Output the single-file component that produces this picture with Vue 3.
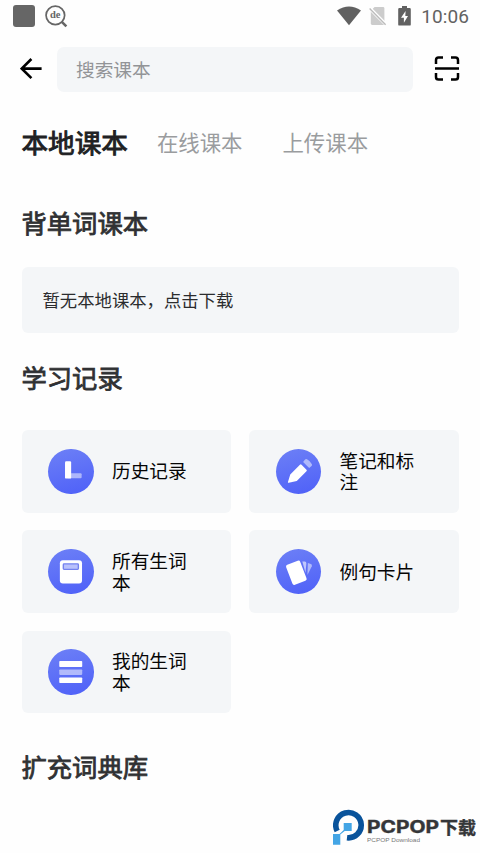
<script setup>
const cards = [
  { icon: 'clock', label: '历史记录' },
  { icon: 'pencil', label: '笔记和标注' },
  { icon: 'book', label: '所有生词本' },
  { icon: 'cards', label: '例句卡片' },
  { icon: 'list', label: '我的生词本' },
]
</script>

<template>
  <div class="screen">
    <div class="status">
      <div class="status-group">
        <span class="app-square"></span>
        <svg class="lens" viewBox="0 0 24 24">
          <circle cx="10.8" cy="10.8" r="9.7" fill="none" stroke="#666" stroke-width="1.8" />
          <path d="M17.3 17.3 22.3 22.3" stroke="#666" stroke-width="2.6" />
          <text x="10.6" y="13.8" text-anchor="middle">de</text>
        </svg>
      </div>
      <div class="status-group right">
        <svg class="wifi" viewBox="0 0 24 20">
          <path d="M0 4.4Q12-3.6 24 4.4L12 19.3Z" fill="#616161" />
        </svg>
        <svg class="sim" viewBox="0 0 18 20">
          <path d="M5.6 1H14q1.4 0 1.4 1.4V19H3.2q-1.4 0-1.4-1.4V4.8Z" fill="#ccc" />
          <path d="M.2 1.8 17 18.6" stroke="#fff" stroke-width="3.4" />
          <path d="M.6 2.6 16.6 18.8" stroke="#bbb" stroke-width="1.4" />
        </svg>
        <svg class="battery" viewBox="0 0 13 20">
          <path d="M4 0h5v2h2.6q1.2 0 1.2 1.2v15.2q0 1.2-1.2 1.2H1.4q-1.2 0-1.2-1.2V3.2Q.2 2 1.4 2H4Z" fill="#616161" />
          <path d="M7.6 5 3 11.8h2.9v5L10 10H7.3Z" fill="#fff" />
        </svg>
        <span class="time">10:06</span>
      </div>
    </div>

    <header class="header">
      <svg class="back" viewBox="0 0 22 22">
        <path d="M11.4 1 1.8 10.6 11.4 20.2M2 10.6h19.6" fill="none" stroke="#000" stroke-width="2.6" />
      </svg>
      <div class="search">搜索课本</div>
      <svg class="scan" viewBox="0 0 26 26">
        <path d="M2 8V4.2Q2 1.6 4.6 1.6H9M17 1.6h4.4Q24 1.6 24 4.2V8M2 17v4Q2 23.6 4.6 23.6H9M17 23.6h4.4Q24 23.6 24 21V17M1 12.5h24" fill="none" stroke="#000" stroke-width="2.5" />
      </svg>
    </header>

    <nav class="tabs">
      <span class="tab active">本地课本</span>
      <span class="tab">在线课本</span>
      <span class="tab">上传课本</span>
    </nav>

    <main class="content">
      <h2 class="title">背单词课本</h2>
      <div class="empty">暂无本地课本，点击下载</div>
      <h2 class="title records">学习记录</h2>
      <div class="grid">
        <div v-for="card in cards" :key="card.icon" class="card">
          <span class="badge">
            <svg viewBox="0 0 46 46">
              <g v-if="card.icon === 'clock'" fill="#fff">
                <path d="M23 24.6h10q1 0 1 1v3q0 1-1 1H20Z" opacity=".5" />
                <rect x="17.2" y="12.5" width="6.2" height="17.4" rx="1.2" />
              </g>
              <g v-else-if="card.icon === 'pencil'" fill="#fff">
                <path d="M24.2 15.9q.8-.8 1.6 0l5 5q.8.8 0 1.6L21 32.3 12.9 34.2q-1.1.2-.8-.9L14.4 25.7Z" />
                <path d="M27.4 13.2l2-2.5q.8-.9 1.9-.4 3.3 1.5 5 5.1.5 1-.4 1.9l-2.4 2Z" opacity=".5" />
              </g>
              <g v-else-if="card.icon === 'book'">
                <rect x="12" y="11.4" width="22.4" height="23.4" rx="3" fill="#fff" />
                <rect x="15.5" y="15" width="15.2" height="5.6" rx=".8" fill="#b9c1fc" stroke="#7482ef" stroke-width="1.4" />
              </g>
              <g v-else-if="card.icon === 'cards'" fill="#fff">
                <path d="M26.6 12.6h2.4q1.9.2 1.7 2l-.9 9.4Z" opacity=".6" />
                <path d="M32.2 14.2l3 1q1.7.6 1 2.3l-4.4 8.8Z" opacity=".5" />
                <rect x="12.9" y="13.2" width="15.3" height="21.6" rx="2" transform="rotate(-21 20.6 24)" />
              </g>
              <g v-else fill="#fff">
                <rect x="11.4" y="12.2" width="23.2" height="6" rx=".8" />
                <rect x="11.4" y="20.8" width="23.2" height="5.4" rx=".8" opacity=".52" />
                <rect x="11.4" y="28.8" width="23.2" height="5.6" rx=".8" />
              </g>
            </svg>
          </span>
          <span class="label">{{ card.label }}</span>
        </div>
      </div>
      <h2 class="title">扩充词典库</h2>
    </main>

    <div class="brand">
      <svg class="brand-mark" viewBox="0 0 32 37">
        <path d="M4.2 22A12.7 12.7 0 1 1 14 28.8" fill="none" stroke="#09539b" stroke-width="5.6" />
        <path d="M10.7 14h8v8h-7l-4.4 3.6v10.1H0V25h6.5l4.2-4Z" fill="#43a5e5" />
      </svg>
      <div class="brand-copy">
        <svg class="brand-name" viewBox="0 0 113 24">
          <text class="latin" x="0" y="18" textLength="72" lengthAdjust="spacingAndGlyphs">PCPOP</text>
          <text class="cjk" x="73" y="18.5" textLength="36" lengthAdjust="spacingAndGlyphs">下载</text>
        </svg>
        <svg class="brand-sub" viewBox="0 0 112 8">
          <text x="0" y="5.5" textLength="53" lengthAdjust="spacingAndGlyphs">PCPOP Download</text>
        </svg>
      </div>
    </div>
  </div>
</template>

<style>
body {
  background: #fefefe;
}
</style>

<style scoped>
.screen {
  position: relative;
  box-sizing: border-box;
  width: 480px;
  height: 853px;
  overflow: hidden;
  background: #fefefe;
  font-family: "Noto Sans CJK SC", sans-serif;
}
svg {
  display: block;
  flex: none;
}
.status {
  display: flex;
  justify-content: space-between;
  height: 46.5px;
  padding: 4.5px 11px 0 13px;
  box-sizing: border-box;
}
.status-group {
  display: flex;
  align-items: center;
  height: 23px;
}
.app-square {
  width: 22px;
  height: 22px;
  border-radius: 3px;
  background: #666;
}
.lens {
  width: 23px;
  height: 23px;
  margin-left: 10px;
}
.lens text {
  font: bold 11px "Liberation Serif", serif;
  fill: #666;
}
.wifi {
  width: 24px;
  height: 20px;
}
.sim {
  width: 18px;
  height: 20px;
  margin-left: 8px;
}
.battery {
  width: 13px;
  height: 20px;
  margin-left: 11px;
}
.time {
  margin-left: 10px;
  color: #626262;
  font: 19px/23px Roboto, sans-serif;
  letter-spacing: 0.1px;
}
.header {
  display: flex;
  align-items: center;
  height: 45.5px;
  padding-left: 20px;
}
.back {
  width: 22px;
  height: 22px;
}
.search {
  width: 356px;
  height: 45.5px;
  margin: 0 21px 0 15px;
  padding-left: 19px;
  box-sizing: border-box;
  border-radius: 7px;
  background: #f4f6f8;
  color: #929497;
  font-size: 18.7px;
  line-height: 43.5px;
}
.scan {
  width: 26px;
  height: 26px;
}
.tabs {
  display: flex;
  align-items: center;
  height: 100px;
  padding: 0 0 2px 21.5px;
}
.tab {
  margin-right: 40px;
  color: #9a9c9e;
  font-size: 21.4px;
  line-height: 32px;
}
.tab.active {
  margin-right: 29px;
  color: #202123;
  font-size: 26.6px;
  -webkit-text-stroke: 0.9px #202123;
}
.content {
  padding: 0 21.5px;
}
.title {
  height: 38px;
  margin: 9px 0 26px;
  color: #303133;
  font-size: 25.3px;
  font-weight: 400;
  line-height: 38px;
  -webkit-text-stroke: 0.8px #303133;
}
.empty {
  height: 66px;
  padding-left: 21px;
  border-radius: 6px;
  background: #f4f6f8;
  color: #2b2c2e;
  font-size: 17.35px;
  line-height: 66px;
}
.title.records {
  margin: 25px 0 34px;
}
.grid {
  display: grid;
  grid-template-columns: 209.5px 209.5px;
  grid-auto-rows: 82.5px;
  gap: 17.8px 18px;
  margin-bottom: 33.5px;
}
.card {
  display: flex;
  align-items: center;
  padding-left: 26.5px;
  border-radius: 6px;
  background: #f4f6f8;
}
.badge {
  width: 45.5px;
  height: 45.5px;
  flex: none;
  border-radius: 50%;
  background: linear-gradient(165deg, #6d80f6, #4e60f8);
}
.label {
  width: 84px;
  margin: 0 0 2px 18.5px;
  color: #050505;
  font-size: 18.7px;
  line-height: 21.6px;
}
.brand {
  position: absolute;
  left: 333px;
  top: 809px;
  display: flex;
}
.brand-mark {
  width: 32px;
  height: 37px;
}
.brand-copy {
  margin: 6px 0 0 2px;
}
.brand-name {
  width: 113px;
  height: 24px;
  margin-bottom: -3px;
}
.brand-name text {
  fill: #353638;
  stroke: #353638;
  stroke-width: 0.4px;
}
.latin {
  font: 700 17px Inter, sans-serif;
}
.cjk {
  font: 700 17.5px "Noto Sans CJK SC", sans-serif;
}
.brand-sub {
  width: 112px;
  height: 8px;
}
.brand-sub text {
  font: 5.8px "Liberation Sans", sans-serif;
  fill: #777;
}
</style>
